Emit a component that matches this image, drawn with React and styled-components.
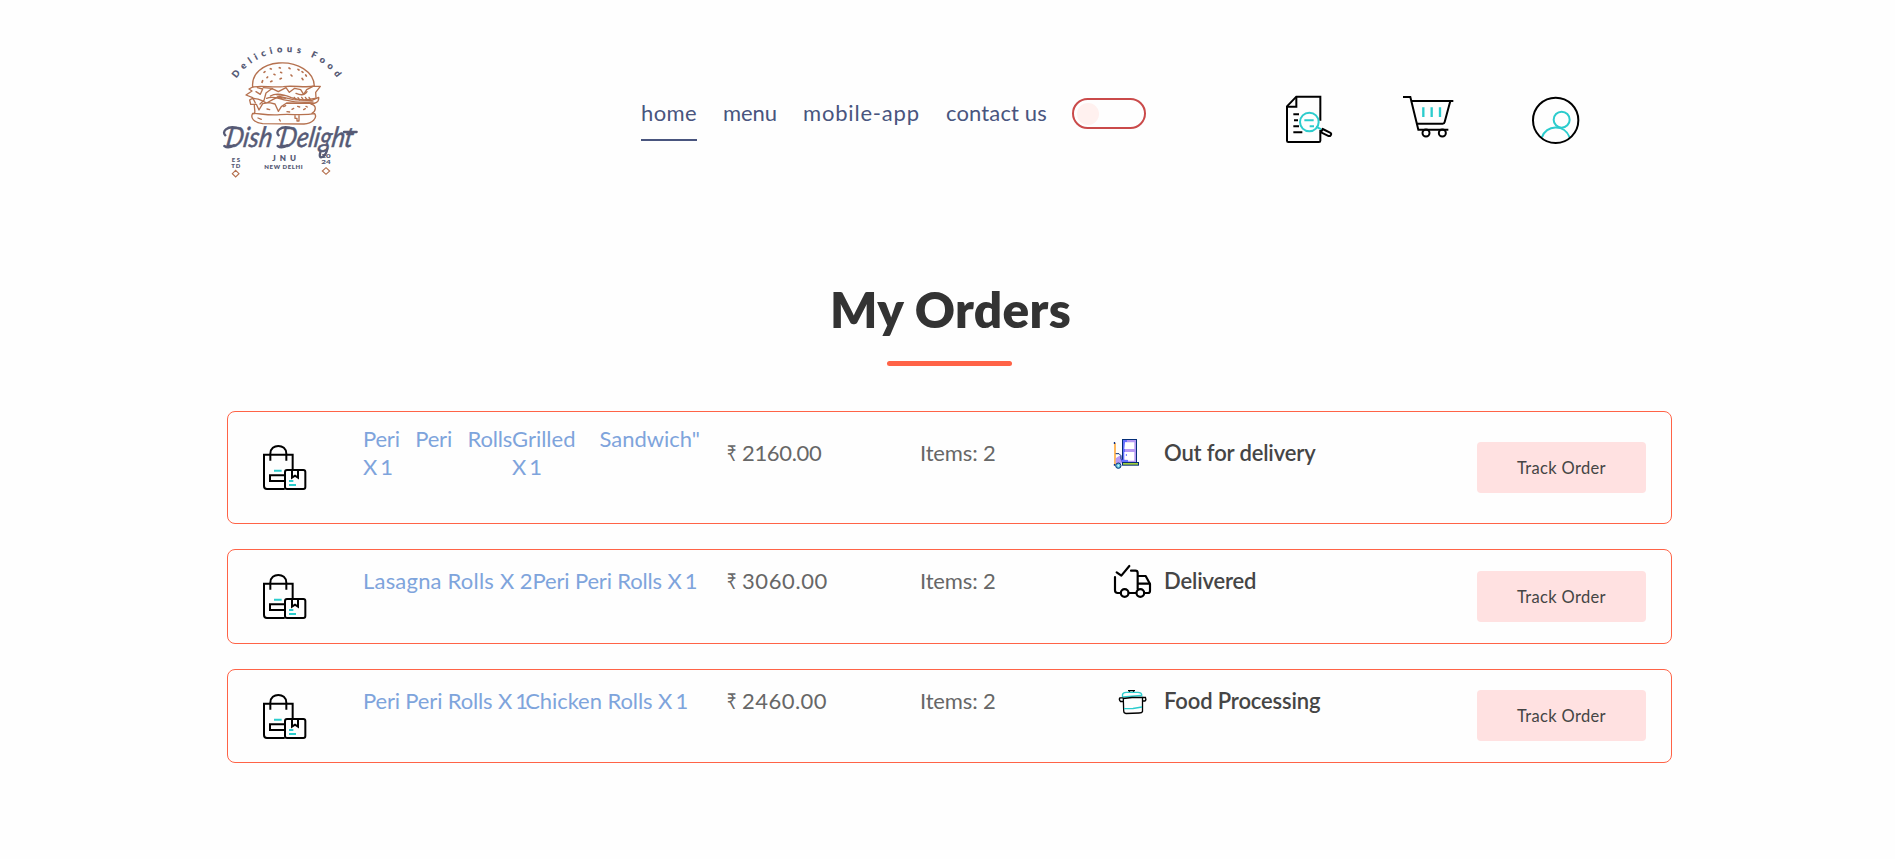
import React from "react";
import styled, { createGlobalStyle } from "styled-components";

const GlobalStyle = createGlobalStyle`
  *, *::before, *::after { box-sizing: border-box; }
  body {
    margin: 0;
    background: #fefefe;
    font-family: Lato, "Liberation Sans", sans-serif;
    color: #676767;
  }
  h1, p { margin: 0; }
`;

const Page = styled.div`
  width: 1895px;
  min-height: 859px;
`;

const Header = styled.header`
  display: flex;
  align-items: flex-start;
  height: 185px;
  padding: 35px 0 0 210px;
`;

const LogoSvg = styled.svg`
  flex: none;
  width: 160px;
  height: 150px;
`;

const Nav = styled.nav`
  display: flex;
  align-items: flex-start;
  gap: 26px;
  margin: 63px 0 0 271px;
`;

const NavLink = styled.a`
  margin-top: 1px;
  padding-bottom: 12px;
  border-bottom: 2px solid ${(p) => (p.$active ? "#49557e" : "transparent")};
  color: #49557e;
  font-size: 22px;
  line-height: 28px;
  letter-spacing: ${(p) => p.$spacing}px;
  white-space: nowrap;
`;

const Toggle = styled.button`
  width: 74px;
  height: 31px;
  margin-left: -1px;
  padding: 0 0 0 3px;
  display: flex;
  align-items: center;
  border: 2px solid #ca4a4a;
  border-radius: 16px;
  background: transparent;
`;

const Knob = styled.span`
  width: 22px;
  height: 22px;
  border-radius: 50%;
  background: #fff1ef;
`;

const HeaderIcons = styled.div`
  display: grid;
  grid-template-columns: 117px 129px 50px;
  margin: 60px 0 0 139px;
`;

const HeaderIcon = styled.svg`
  width: ${(p) => p.$width || 50}px;
  height: 50px;
  fill: none;
  stroke: #000;
  stroke-width: 6;
`;

const Orders = styled.main`
  display: flex;
  flex-direction: column;
  align-items: center;
  width: 1445px;
  margin-left: 227px;
  padding-top: 94px;
`;

const Title = styled.h1`
  padding-left: 2px;
  color: #333;
  font-size: 49.5px;
  font-weight: 800;
  line-height: 60px;
  letter-spacing: 0.3px;
  white-space: nowrap;
`;

const TitleBar = styled.span`
  width: 125px;
  height: 5px;
  margin-top: 22px;
  border-radius: 3px;
  background: #ff6347;
`;

const OrderList = styled.div`
  display: grid;
  gap: 25px;
  width: 100%;
  margin-top: 45px;
`;

const OrderCard = styled.article`
  display: grid;
  grid-template-columns: 101px 364px 193px 194px 363px 169px;
  align-items: start;
  height: ${(p) => p.$height}px;
  padding: 0 25px 0 34px;
  border: 1px solid #ff6347;
  border-radius: 8px;
  font-size: 22px;
  line-height: 28px;
`;

const BagSvg = styled.svg`
  align-self: center;
  width: 45px;
  height: 47px;
  fill: none;
  stroke: #000;
  stroke-width: 6;
`;

const Names = styled.div`
  display: flex;
  padding-top: ${(p) => p.$top}px;
  color: #7ea4dc;
`;

const DishName = styled.p`
  width: ${(p) => (p.$width ? `${p.$width}px` : "auto")};
  letter-spacing: ${(p) => p.$spacing}px;
  text-align: justify;
  white-space: ${(p) => (p.$width ? "normal" : "nowrap")};
`;

const Quantity = styled.span`
  letter-spacing: ${(p) => (p.$tight ? -2.8 : 0)}px;
  word-spacing: ${(p) => (p.$tight ? 3 : 0)}px;
  white-space: nowrap;
`;

const Detail = styled.p`
  padding-top: ${(p) => p.$top}px;
  letter-spacing: ${(p) => p.$spacing || 0}px;
  white-space: nowrap;
`;

const Rupee = styled.span`
  display: inline-block;
  width: 15px;
  letter-spacing: 0;
  transform: scaleX(0.72);
  transform-origin: left;
`;

const Status = styled.div`
  display: flex;
  gap: 12px;
  padding-top: ${(p) => p.$top}px;
  color: #454545;
  font-weight: 600;
  letter-spacing: -0.15px;
  white-space: nowrap;
`;

const StatusSvg = styled.svg`
  flex: none;
  width: 38px;
  height: 34px;
  margin: -2px 0;
  overflow: visible;
  fill: none;
`;

const TrackButton = styled.button`
  align-self: ${(p) => (p.$top ? "start" : "center")};
  height: 51px;
  margin-top: ${(p) => p.$top || 0}px;
  border: 0;
  border-radius: 4px;
  background: #ffe1e1;
  color: #454545;
  font: 400 16.5px Lato, "Liberation Sans", sans-serif;
  letter-spacing: 0.33px;
`;

const AQUA = "#2ccccd";
const RUST = "#b5714f";
const INK = "#565a75";

function Logo() {
  return (
    <LogoSvg viewBox="0 0 480 450" fill="none" fontFamily="Lato, sans-serif">
      <path id="arc" d="M78 132 A184 184 0 0 1 386 137" />
      <text fill={INK} fontSize="28" fontWeight="800">
        <textPath href="#arc" startOffset="2" textLength="352">Delicious Food</textPath>
      </text>
      <g stroke={RUST} strokeWidth="4" strokeLinecap="round" strokeLinejoin="round">
        <path d="M128 156 C124 116 158 88 206 84 C262 80 312 110 313 153 C288 160 250 150 220 155 C184 158 156 151 128 156Z" />
        <path d="M162 112l3 -2M181 101l3 1M208 98l3 1M237 99l3 2M171 128l2 -2M192 118l3 1M212 112l3 1M210 132l4 -2M243 120l3 3M264 103l3 2M276 130l3 4M156 142l2 -5M182 140l4 -2M276 110l3 2M287 120l2 3" strokeWidth="5" />
        <path d="M128 156 L117 162 L126 168 L108 180 L128 188 L136 204 M142 158 L158 162 L151 178 L138 170 M160 158 L187 160 L168 174 L162 196 L150 207 M185 160 L205 170 L228 158 L238 172 L254 160 L272 164 L281 178 L290 164 L309 154 L331 154 L317 172 L318 190" />
        <path d="M119 195 C126 188 142 190 154 196 L170 204 L188 194 L208 184 L250 194 L304 197 L326 187 C328 204 312 207 300 205 L230 204 L214 215 L205 229 L195 207 L178 203 L158 206 L147 225 L139 208 L122 208Z" />
        <path d="M181 183 C198 173 226 180 244 188 C266 197 290 196 315 190 M170 190 C190 180 207 193 232 196 C260 204 292 202 309 201 M199 179 L227 182 M202 186 L226 190 M258 175 C274 182 286 178 291 170" />
        <path d="M253 187l5 7M264 188l5 7M275 187l5 7M286 187l5 7M297 187l4 6" />
        <path d="M133 211 C133 223 138 235 130 236 M303 207 C319 211 320 226 306 235 M171 222l8 2M221 215l6 -3M246 223l5 -3M263 214l6 2M281 224l5 -3M231 230l8 1M288 214l4 2" />
        <path d="M128 235 C120 249 132 263 158 266 L282 267 C307 266 323 249 314 236 C276 243 246 236 210 239 C178 242 151 236 128 235Z" />
        <path d="M255 242 V250 H261 V258 H267 V242 M208 253l3 5M144 249l10 4" />
      </g>
      <g fill={INK} stroke={INK} strokeWidth="1.5" fontSize="84" fontStyle="italic" fontWeight="400">
        <text transform="translate(45 335) skewX(-9)" textLength="138" lengthAdjust="spacingAndGlyphs">Dish</text>
        <text transform="translate(205 335) skewX(-9)" textLength="222" lengthAdjust="spacingAndGlyphs">Delight</text>
      </g>
      <path d="M78 278 C52 272 34 290 46 301 M43 333 C52 340 64 336 72 331 M238 278 C212 272 194 290 206 301 M203 333 C212 340 224 336 232 331 M331 352 C323 378 347 367 352 342 M402 291 H440" stroke={INK} strokeWidth="7" strokeLinecap="round" />
      <g fill={INK} fontWeight="800">
        <text x="187" y="378" fontSize="24" textLength="71">JNU</text>
        <text x="163" y="403" fontSize="18" textLength="115">NEW DELHI</text>
        <text x="65" y="381" fontSize="18" textLength="25">ES</text>
        <text x="64" y="398" fontSize="18" textLength="27">TD</text>
        <text x="334" y="370" fontSize="18" textLength="28" lengthAdjust="spacingAndGlyphs">20</text>
        <text x="334" y="387" fontSize="18" textLength="28" lengthAdjust="spacingAndGlyphs">24</text>
      </g>
      <path d="M77 406 L87 416 L77 426 L67 416Z M348 398 L359 408 L348 418 L337 408Z" stroke={RUST} strokeWidth="3.5" />
    </LogoSvg>
  );
}

function OrdersIcon() {
  return (
    <HeaderIcon viewBox="45 45 150 150">
      <path d="M151 122V50H79L51 79V182Q51 186 55 186H147Q151 186 151 182V150" />
      <path d="M79 50V80H51" />
      <path d="M70 103H87M72 121H84M70 139H87M70 157H97" />
      <g stroke={AQUA}>
        <circle cx="118" cy="126" r="28" />
        <path d="M103 121H131M119 139H132M138 140L154 148" />
      </g>
      <path d="M158 147L180 158Q186 161 182 166Q179 170 173 167L153 157Z" />
    </HeaderIcon>
  );
}

function CartIcon() {
  return (
    <HeaderIcon $width={54} viewBox="396 45 162 150">
      <path d="M399 51H421L445 149H535" />
      <path d="M424 63H550M541 63L524 126Q523 131 518 131H441" />
      <path d="M460 82V111M485 82V111M510 82V111" stroke={AQUA} strokeWidth="7" />
      <circle cx="468" cy="159" r="10.5" />
      <circle cx="517" cy="159" r="10.5" />
    </HeaderIcon>
  );
}

function UserIcon() {
  return (
    <HeaderIcon viewBox="783 45 150 150">
      <g stroke={AQUA}>
        <circle cx="875" cy="119" r="24" />
        <path d="M816 172C827 134 884 131 899 172" />
      </g>
      <circle cx="857" cy="121" r="68" />
    </HeaderIcon>
  );
}

function BagIcon() {
  return (
    <BagSvg viewBox="126 132 135 141">
      <path d="M151 182V161C151 130 199 130 199 161V182" />
      <path d="M194 267H141Q132 267 132 258V164H218V209" />
      <path d="M194 226H150V243H194" />
      <rect x="195" y="210" width="61" height="57" rx="6" />
      <path d="M216 210V233L225 227L234 233V210" />
      <path d="M162 212H185M207 243H220M207 255H228" stroke={AQUA} />
    </BagSvg>
  );
}

function HandcartIcon() {
  return (
    <StatusSvg viewBox="1242 111 114 102">
      <path d="M1245 129V194" stroke="#ff9811" strokeWidth="4" />
      <path d="M1243.500 126V132M1243.500 192V197" stroke="#0b2e80" strokeWidth="4" />
      <path d="M1247 175L1262 165L1270 190H1247Z" fill="#b79af3" />
      <rect x="1267.500" y="118.500" width="42" height="69" fill="#b79af3" stroke="#052e78" strokeWidth="3" />
      <path d="M1269 120H1281V126H1275V186H1269Z" fill="#6571ff" />
      <path d="M1275 127H1303V147H1273ZM1273 156H1303V182H1283V179H1273Z" fill="#fff" />
      <path d="M1279 162V168" stroke="#6571ff" strokeWidth="3" />
      <path d="M1247 161H1257L1263 167V176L1268 187" stroke="#052e78" strokeWidth="3" />
      <path d="M1261 178L1268 188H1284V180H1272Z" fill="#6571ff" />
      <rect x="1267.500" y="187.500" width="48" height="8" fill="#a4d13d" stroke="#052e78" strokeWidth="3" />
      <circle cx="1255" cy="197" r="8" fill="#65c9dd" stroke="#052e78" strokeWidth="3" />
      <circle cx="1255" cy="197" r="2.500" fill="#d5f6ff" />
    </StatusSvg>
  );
}

function TruckIcon() {
  return (
    <StatusSvg viewBox="72 75 114 102" stroke="#000" strokeWidth="6.5" strokeLinecap="round" strokeLinejoin="round">
      <path d="M80 97L94 107L118 78" />
      <path d="M75 111V151Q75 159 83 159H92M116 159H138M163 159H174Q180 159 180 153V132L167 108H144" />
      <path d="M123 92H136Q143 92 143 99V147M144 131H179" />
      <circle cx="104" cy="159" r="11.500" />
      <circle cx="151" cy="159" r="11.500" />
    </StatusSvg>
  );
}

function PotIcon() {
  return (
    <StatusSvg viewBox="0 0 38 34" stroke="#000" strokeWidth="1.300">
      <path d="M14 5.700H21M15.500 6V7.500M19.500 6V7.500" />
      <path d="M8.500 12V9.500Q9 7.500 12 7.300H24Q27.500 7.500 27.700 9.500V11.500M9 12L27 10.500" stroke={AQUA} />
      <path d="M9.300 13.500L18 12.500L28.500 12.300V26.500Q28 28 25 28L12 28.500Q9.700 28.300 9.700 26Z" />
      <path d="M9.300 12.800H6Q4.500 14.500 6.500 16.500H9M28.500 12.500H31.500Q32.500 14.500 31 16H28.500" />
      <path d="M10 23.700L19 23.500L28 22" stroke={AQUA} />
    </StatusSvg>
  );
}

const links = [
  { label: "home", spacing: 0.38, active: true },
  { label: "menu", spacing: -0.07 },
  { label: "mobile-app", spacing: 0.82 },
  { label: "contact us", spacing: 0.15 },
];

const orders = [
  {
    height: 113,
    nameTop: 13,
    top: 27,
    dishes: [
      { name: "Peri Peri Rolls", qty: 1, width: 149, spacing: -0.2 },
      { name: 'Grilled Sandwich"', qty: 1, width: 188, spacing: 0 },
    ],
    price: "2160.00",
    priceSpacing: -0.35,
    Icon: HandcartIcon,
    status: "Out for delivery",
  },
  {
    height: 95,
    nameTop: 17,
    top: 17,
    dishes: [
      { name: "Lasagna Rolls", qty: 2, spacing: 0.2 },
      { name: "Peri Peri Rolls", qty: 1, spacing: -0.16 },
    ],
    price: "3060.00",
    priceSpacing: 0.6,
    Icon: TruckIcon,
    status: "Delivered",
  },
  {
    height: 94,
    nameTop: 17,
    top: 17,
    buttonTop: 20,
    dishes: [
      { name: "Peri Peri Rolls", qty: 1, spacing: -0.16 },
      { name: "Chicken Rolls", qty: 1, spacing: -0.07 },
    ],
    price: "2460.00",
    priceSpacing: 0.46,
    Icon: PotIcon,
    status: "Food Processing",
  },
];

function Order({ order }) {
  const { Icon } = order;
  return (
    <OrderCard $height={order.height}>
      <BagIcon />
      <Names $top={order.nameTop}>
        {order.dishes.map((dish) => (
          <DishName key={dish.name} $width={dish.width} $spacing={dish.spacing}>
            {dish.name} <Quantity $tight={dish.qty === 1}>X {dish.qty}</Quantity>
          </DishName>
        ))}
      </Names>
      <Detail $top={order.top} $spacing={order.priceSpacing}>
        <Rupee>₹</Rupee>
        {order.price}
      </Detail>
      <Detail $top={order.top} $spacing={-0.15}>Items: 2</Detail>
      <Status $top={order.top}>
        <Icon />
        <span>{order.status}</span>
      </Status>
      <TrackButton $top={order.buttonTop}>Track Order</TrackButton>
    </OrderCard>
  );
}

export default function App() {
  return (
    <Page>
      <GlobalStyle />
      <Header>
        <Logo />
        <Nav>
          {links.map((link) => (
            <NavLink key={link.label} $active={link.active} $spacing={link.spacing}>
              {link.label}
            </NavLink>
          ))}
          <Toggle aria-label="Toggle theme">
            <Knob />
          </Toggle>
        </Nav>
        <HeaderIcons>
          <OrdersIcon />
          <CartIcon />
          <UserIcon />
        </HeaderIcons>
      </Header>
      <Orders>
        <Title>My Orders</Title>
        <TitleBar />
        <OrderList>
          {orders.map((order) => (
            <Order key={order.price} order={order} />
          ))}
        </OrderList>
      </Orders>
    </Page>
  );
}
